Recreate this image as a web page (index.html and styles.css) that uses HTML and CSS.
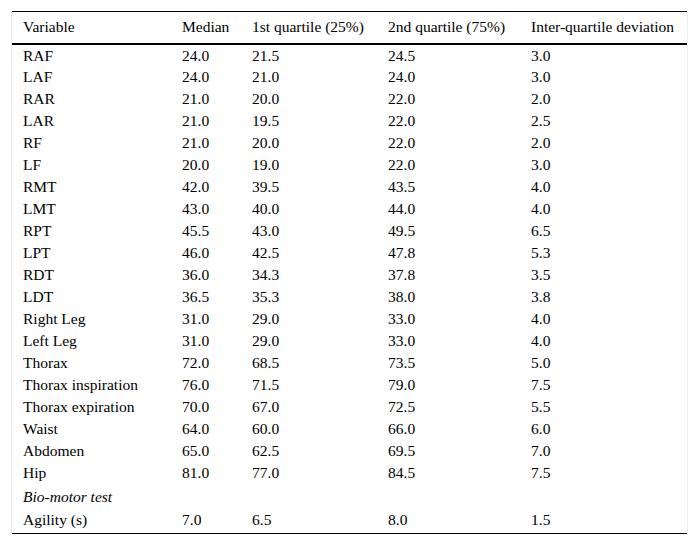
FILE: index.html
```html
<!DOCTYPE html>
<html>
<head>
<meta charset="utf-8">
<link rel="stylesheet" href="styles.css">
</head>
<body>
<div class="wrap">
<table class="data">
<colgroup>
<col class="c1"><col class="c2"><col class="c3"><col class="c4"><col class="c5">
</colgroup>
<thead>
<tr><th>Variable</th><th>Median</th><th>1st quartile (25%)</th><th>2nd quartile (75%)</th><th>Inter-quartile deviation</th></tr>
</thead>
<tbody>
<tr><td>RAF</td><td>24.0</td><td>21.5</td><td>24.5</td><td>3.0</td></tr>
<tr><td>LAF</td><td>24.0</td><td>21.0</td><td>24.0</td><td>3.0</td></tr>
<tr><td>RAR</td><td>21.0</td><td>20.0</td><td>22.0</td><td>2.0</td></tr>
<tr><td>LAR</td><td>21.0</td><td>19.5</td><td>22.0</td><td>2.5</td></tr>
<tr><td>RF</td><td>21.0</td><td>20.0</td><td>22.0</td><td>2.0</td></tr>
<tr><td>LF</td><td>20.0</td><td>19.0</td><td>22.0</td><td>3.0</td></tr>
<tr><td>RMT</td><td>42.0</td><td>39.5</td><td>43.5</td><td>4.0</td></tr>
<tr><td>LMT</td><td>43.0</td><td>40.0</td><td>44.0</td><td>4.0</td></tr>
<tr><td>RPT</td><td>45.5</td><td>43.0</td><td>49.5</td><td>6.5</td></tr>
<tr><td>LPT</td><td>46.0</td><td>42.5</td><td>47.8</td><td>5.3</td></tr>
<tr><td>RDT</td><td>36.0</td><td>34.3</td><td>37.8</td><td>3.5</td></tr>
<tr><td>LDT</td><td>36.5</td><td>35.3</td><td>38.0</td><td>3.8</td></tr>
<tr><td>Right Leg</td><td>31.0</td><td>29.0</td><td>33.0</td><td>4.0</td></tr>
<tr><td>Left Leg</td><td>31.0</td><td>29.0</td><td>33.0</td><td>4.0</td></tr>
<tr><td>Thorax</td><td>72.0</td><td>68.5</td><td>73.5</td><td>5.0</td></tr>
<tr><td>Thorax inspiration</td><td>76.0</td><td>71.5</td><td>79.0</td><td>7.5</td></tr>
<tr><td>Thorax expiration</td><td>70.0</td><td>67.0</td><td>72.5</td><td>5.5</td></tr>
<tr><td>Waist</td><td>64.0</td><td>60.0</td><td>66.0</td><td>6.0</td></tr>
<tr><td>Abdomen</td><td>65.0</td><td>62.5</td><td>69.5</td><td>7.0</td></tr>
<tr><td>Hip</td><td>81.0</td><td>77.0</td><td>84.5</td><td>7.5</td></tr>
<tr class="section"><td colspan="5">Bio-motor test</td></tr>
<tr class="last"><td>Agility (s)</td><td>7.0</td><td>6.5</td><td>8.0</td><td>1.5</td></tr>
</tbody>
</table>
</div>
</body>
</html>
```

FILE: styles.css
```css
html, body {
  margin: 0;
  padding: 0;
  background: #ffffff;
}
body {
  padding: 11px 0 0 11px;
  font-family: "Liberation Serif", "Times New Roman", serif;
  font-size: 15.5px;
  color: #000;
}
.wrap {
  width: 675px;
  border-left: 1px solid #ececec;
  border-right: 1px solid #ececec;
}
.data {
  width: 100%;
  border-collapse: collapse;
  table-layout: fixed;
  border-top: 1px solid #000;
  border-bottom: 1px solid #000;
}
.c1 { width: 159px; }
.c2 { width: 70px; }
.c3 { width: 136px; }
.c4 { width: 143px; }
.c5 { width: 167px; }
.data th,
.data td {
  text-align: left;
  font-weight: normal;
  padding: 0 0 0 11px;
  white-space: nowrap;
  vertical-align: middle;
  box-sizing: border-box;
}
.data th {
  height: 32px;
  line-height: 17px;
  padding-bottom: 1px;
  border-bottom: 2px solid #000;
}
.data td {
  height: 22px;
  line-height: 17px;
}
.section td {
  height: 24px;
  padding-top: 2px;
  font-style: italic;
}
.last td {
  height: 26px;
  padding-top: 0;
  padding-bottom: 2px;
}
```
